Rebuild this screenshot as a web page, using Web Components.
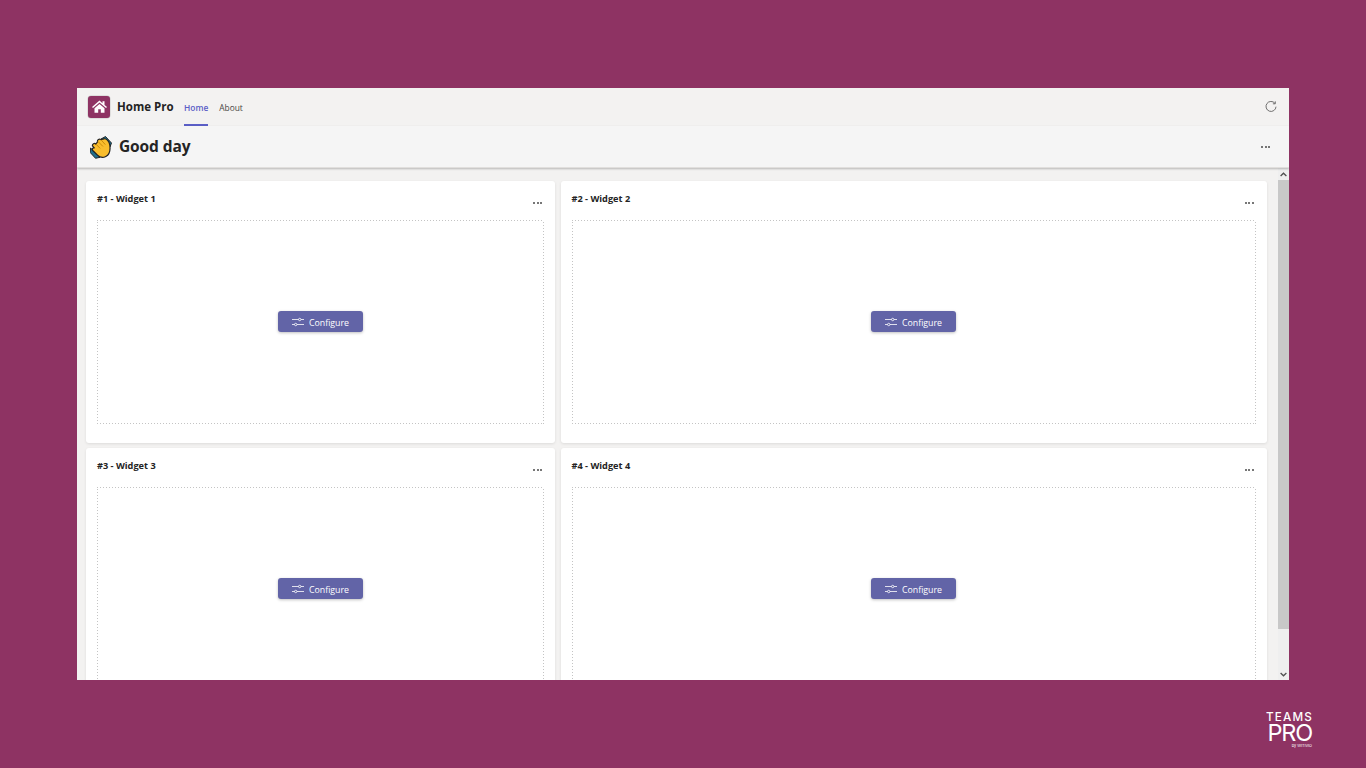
<!DOCTYPE html>
<html lang="en"><head><meta charset="utf-8"><title>Home Pro</title>
<style>
html,body{margin:0;height:768px;overflow:hidden;background:#8e3363;font-family:"Open Sans","Liberation Sans",sans-serif}
</style></head><body>
<app-stage></app-stage>
<template id="t-stage"><style>
:host{display:block;height:768px;box-sizing:border-box;padding:88px 77px 0;position:relative}
.win{height:592px;display:flex;flex-direction:column;background:#f3f2f1;overflow:hidden}
.brand{position:absolute;left:1262px;top:711px;width:51px;color:#fff;text-align:right}
.t{display:block;font:500 11.700px/13px Inter,"Liberation Sans",sans-serif;letter-spacing:1.150px;margin-right:0}
.p{display:block;font:400 23.500px/18px Inter,"Liberation Sans",sans-serif;letter-spacing:-1.200px;margin-right:1px}
.b{display:block;font:400 3.800px/5px Inter,"Liberation Sans",sans-serif;padding-right:1px;margin-top:1px}
</style>
<div class="win"><app-bar></app-bar><greeting-bar></greeting-bar><scroll-area>
<widget-card title-text="#1 - Widget 1"></widget-card>
<widget-card title-text="#2 - Widget 2"></widget-card>
<widget-card title-text="#3 - Widget 3"></widget-card>
<widget-card title-text="#4 - Widget 4"></widget-card>
</scroll-area></div>
<div class="brand"><span class="t">TEAMS</span><span class="p">PRO</span><span class="b">by WITIVIO</span></div>
</template>
<template id="t-bar"><style>
:host{display:flex;align-items:stretch;height:38px;flex:none;background:#f3f2f1;padding:0 11px;box-sizing:border-box}
.logo{width:22px;height:22px;border-radius:3px;background:#8e3363;align-self:center;margin-top:-1px;display:flex;align-items:center;justify-content:center;box-shadow:0 0 0 .5px #7a7a7a55;flex:none}
.name{font:700 11.500px/37px "Open Sans","Liberation Sans",sans-serif;color:#242424;margin:0 0 0 7px;width:67px;white-space:nowrap;flex:none}
.tab{font:400 8.400px/39px "Open Sans","Liberation Sans",sans-serif;color:#484644;margin-right:11px;box-sizing:border-box;height:38px;white-space:nowrap}
.tab.on{color:#5b5fc7;font-weight:600;border-bottom:2px solid #5b5fc7}
.sp{flex:1}
svg.r{align-self:center;margin:0 1px 0 0}
</style>
<span class="logo"><svg width="15" height="13" viewBox="0 0 15 13"><path fill="#fff" d="M7.5.6 0 7l1 1.1L7.5 2.6 14 8.100 15 7l-2.500-2.100V1.200h-2v2L7.500.6zM2.500 8.300v4.500h3.700V9.300h2.600v3.500h3.700V8.300L7.500 4 2.500 8.300z"/></svg></span>
<span class="name">Home Pro</span>
<span class="tab on">Home</span><span class="tab">About</span><span class="sp"></span>
<svg class="r" width="12" height="12" viewBox="0 0 12 12" fill="none" stroke="#616161" stroke-width=".9"><path d="M9.900 2.300A5 5 0 1 0 11 5.700"/><path d="M10.300.4v2.400H7.900"/></svg>
</template>
<template id="t-greet"><style>
:host{display:flex;align-items:center;height:42px;flex:none;background:#f5f5f5;box-sizing:border-box;padding:0 19px 0 13px;box-shadow:0 1px 2px #00000040;position:relative;z-index:1;border-bottom:1px solid #e1dfdd}
h1{margin:0 0 0 7px;font:700 15.500px/1 "Open Sans","Liberation Sans",sans-serif;color:#242424;flex:1;letter-spacing:-.1px;padding-top:1px}
svg{margin-top:2px}
</style>
<svg width="22" height="23" viewBox="0 0 22 23"><path fill="#1f6e8c" stroke="#1a1a1a" stroke-width=".9" d="M11 3l4.500-2.500 6 6.500-1.500 4zM.6 12l-.4 4.500 5.300 5.800 4.500-1z"/><path fill="#f9bd2c" stroke="#222" stroke-width="1.200" d="M2.500 10C2 8 4.500 6.500 5.800 8L7.500 5.800C7 4 9.200 2.500 10.800 3.600L14 2.800C16.500 2.400 19.300 5.500 19.800 9c.7 4.800-.2 9.500-4 11.500-3 1.600-6.300.6-8.300-1.400L2.800 14.500c-1.300-1.500.2-3.400 1.700-2.300z"/><path fill="none" stroke="#c98a0c" stroke-width="1" d="M5.800 8l4.400 4.400M8 5.500l5 5M11 3.800l4.300 4.800"/></svg>
<h1>Good day</h1><dots-mark></dots-mark></template>
<template id="t-scroll"><style>
:host{flex:1;min-height:0;display:flex;background:#f3f2f1;overflow:hidden}
.grid{flex:1;display:grid;grid-template-columns:469px 706px;grid-auto-rows:262px;gap:5px 5.500px;padding:13px 0 0 9px;align-content:start;min-width:0}
.bar{width:11px;flex:none;background:#efefef;display:flex;flex-direction:column;align-items:center}
.arrow{height:12px;flex:none;display:flex;align-items:center;justify-content:center}
.thumb{height:449px;width:11px;background:#c8c8c8;flex:none}
.fill{flex:1}
</style><div class="grid"><slot></slot></div>
<div class="bar"><span class="arrow"><svg width="7" height="5" viewBox="0 0 7 5" fill="none" stroke="#505050" stroke-width="1.300"><path d="M.6 4 3.500 1.200 6.400 4"/></svg></span><span class="thumb"></span><span class="fill"></span><span class="arrow"><svg width="7" height="5" viewBox="0 0 7 5" fill="none" stroke="#505050" stroke-width="1.300"><path d="M.6 1 3.500 3.800 6.400 1"/></svg></span></div>
</template>
<template id="t-card"><style>
:host{display:flex;flex-direction:column;background:#fff;border-radius:3px;box-shadow:0 1px 3px #00000018;box-sizing:border-box;padding:11px 11px 19px 11px;min-width:0}
.head{display:flex;justify-content:space-between;height:27.500px;flex:none}
.title{font:700 9.200px/14px "Open Sans","Liberation Sans",sans-serif;color:#242424}
dots-mark{margin:9px 2px 0 0}
.box{flex:1;display:flex;align-items:center;justify-content:center;
 background:
  repeating-linear-gradient(90deg,#c4c4c4 0 1px,transparent 1px 3px) top/100% 1px no-repeat,
  repeating-linear-gradient(90deg,#c4c4c4 0 1px,transparent 1px 3px) bottom/100% 1px no-repeat,
  repeating-linear-gradient(0deg,#c4c4c4 0 1px,transparent 1px 3px) left/1px 100% no-repeat,
  repeating-linear-gradient(0deg,#c4c4c4 0 1px,transparent 1px 3px) right/1px 100% no-repeat}
</style><div class="head"><span class="title"></span><dots-mark></dots-mark></div>
<div class="box"><cfg-button>Configure</cfg-button></div></template>
<template id="t-dots"><style>
:host{display:inline-flex;gap:1.500px;align-items:center;height:3px;flex:none}
i{width:2px;height:2px;background:#4a4a4a;border-radius:50%;display:block}
</style><i></i><i></i><i></i></template>
<template id="t-btn"><style>
:host{display:inline-flex;align-items:center;justify-content:center;gap:5px;width:85px;height:21px;background:#6264a7;border-radius:3px;box-shadow:0 1px 3px #00000040;color:#fff;font:400 8.800px/12px "Open Sans","Liberation Sans",sans-serif}
span{padding-top:2px}
</style><svg width="12" height="10" viewBox="0 0 12 10" fill="none" stroke="#fff" stroke-width=".8"><path d="M0 2.500h6.500M9 2.500h3M0 7.500h2.500M5 7.500h7"/><circle cx="7.700" cy="2.500" r="1.200"/><circle cx="3.700" cy="7.500" r="1.200"/></svg><span><slot></slot></span></template>
<script>
function def(name, tpl, init){
  customElements.define(name, class extends HTMLElement{
    constructor(){super();this.attachShadow({mode:'open'}).appendChild(document.getElementById(tpl).content.cloneNode(true));}
    connectedCallback(){if(init)init(this);}
  });
}
def('dots-mark','t-dots');
def('cfg-button','t-btn');
def('widget-card','t-card',function(el){el.shadowRoot.querySelector('.title').textContent=el.getAttribute('title-text');});
def('scroll-area','t-scroll');
def('greeting-bar','t-greet');
def('app-bar','t-bar');
def('app-stage','t-stage');
</script>
</body></html>
